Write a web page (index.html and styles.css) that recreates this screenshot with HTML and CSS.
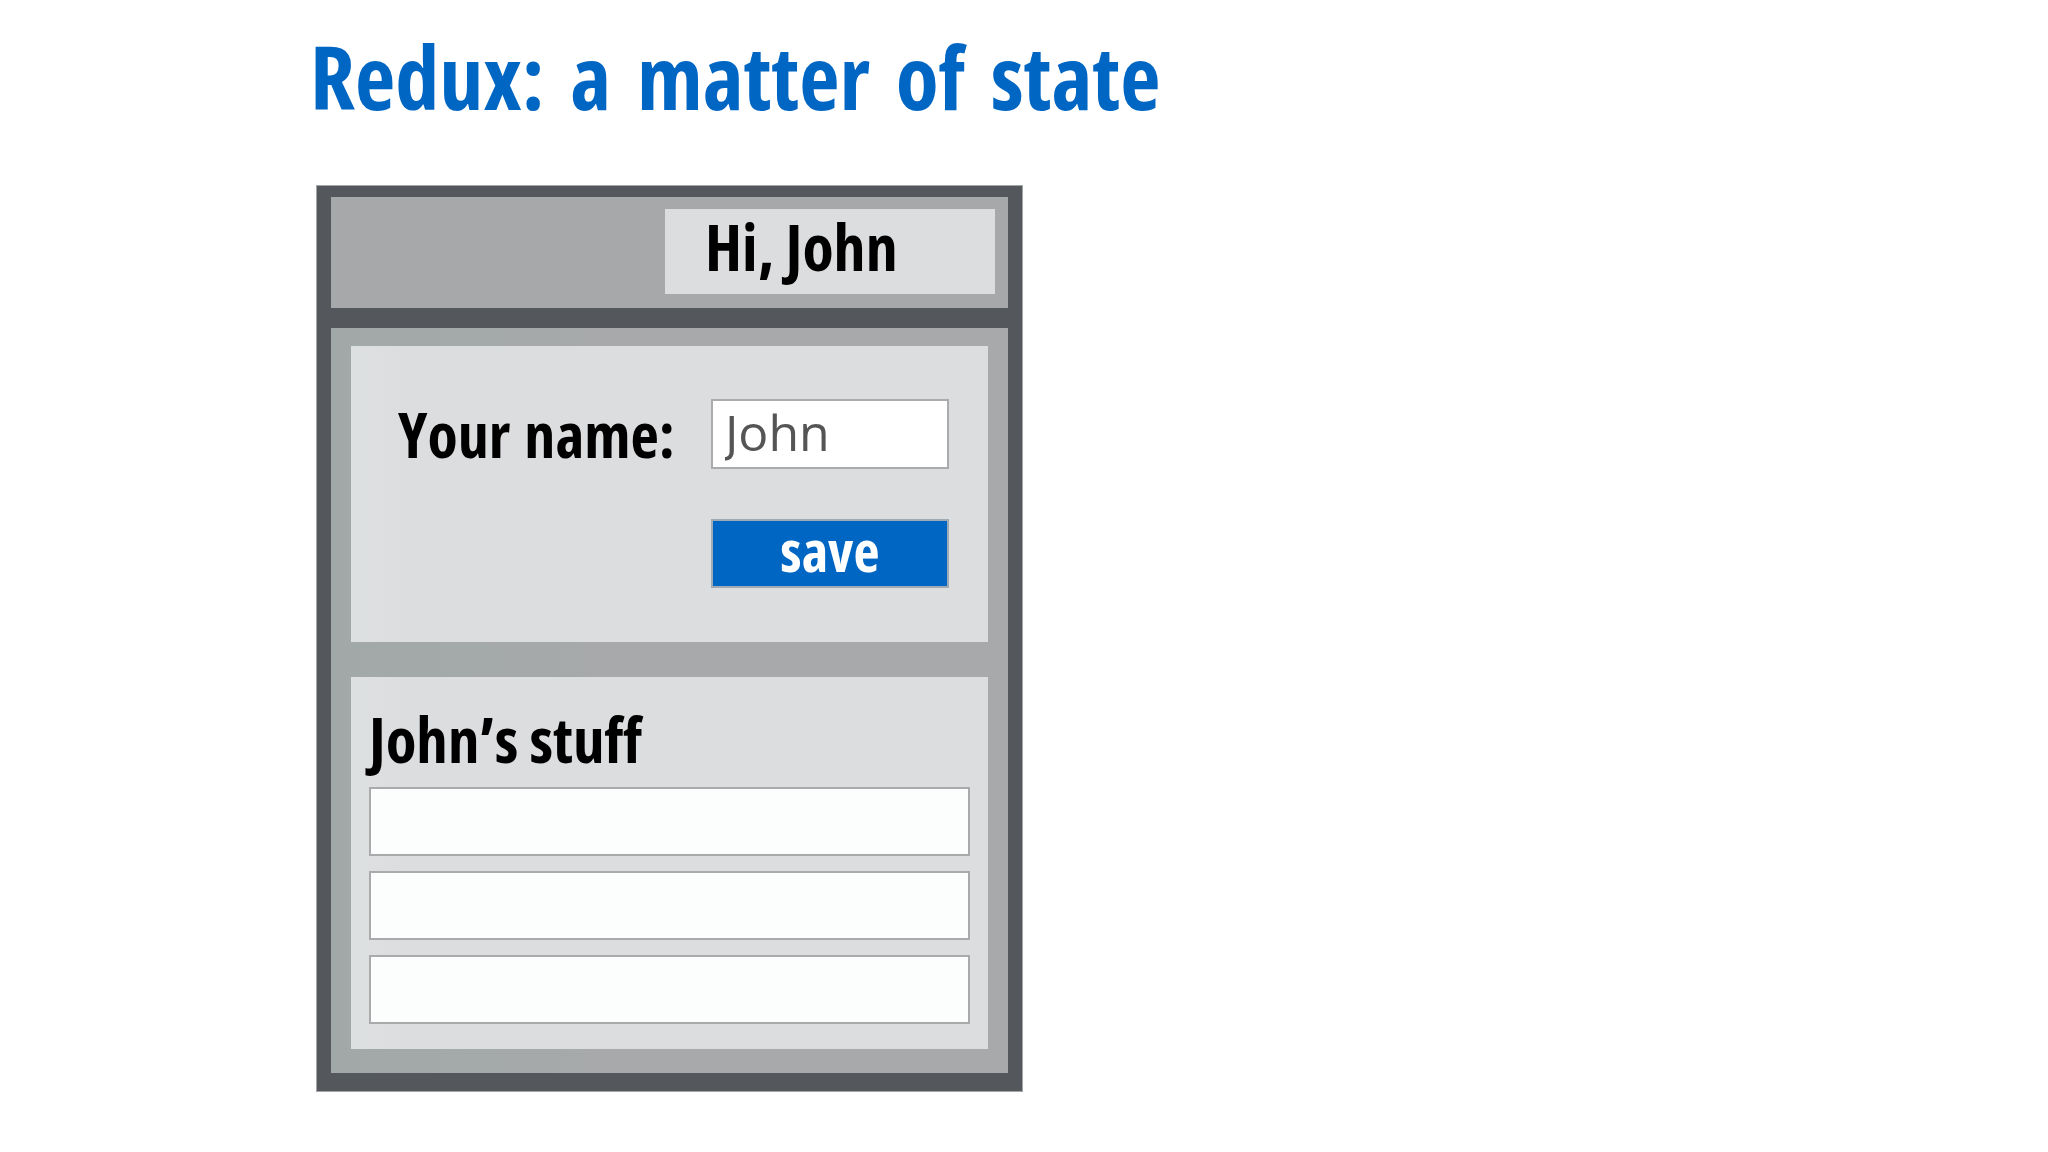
FILE: index.html
```html
<!DOCTYPE html>
<html lang="en">
<head>
    <meta charset="UTF-8">
    <meta name="viewport" content="width=device-width, initial-scale=1.0">
    <title>Redux: a matter of state</title>
    <link rel="stylesheet" href="styles.css">
</head>
<body>
    <div class="slide">
        <h1 class="title">Redux: a matter of state</h1>

        <div class="app-window">
            <!-- Top bar with the greeting -->
            <div class="app-header">
                <div class="greeting">Hi, John</div>
            </div>

            <div class="app-main">
                <!-- Name form -->
                <div class="panel name-form">
                    <label class="name-label" for="name">Your name:</label>
                    <input class="name-input" id="name" type="text" value="John">
                    <button class="save-btn">save</button>
                </div>

                <!-- List of the user's things -->
                <div class="panel stuff">
                    <h2 class="stuff-title">John’s stuff</h2>
                    <div class="stuff-list">
                        <div class="stuff-row"></div>
                        <div class="stuff-row"></div>
                        <div class="stuff-row"></div>
                    </div>
                </div>
            </div>
        </div>
    </div>
</body>
</html>
```

FILE: styles.css
```css
* {
    margin: 0;
    padding: 0;
    box-sizing: border-box;
}

body {
    background: #ffffff;
    font-family: 'Open Sans', 'Noto Sans', sans-serif;
}

.slide {
    padding: 32px 0 0 310px;
}

.title {
    font-size: 88px;
    line-height: 1;
    font-weight: 700;
    font-stretch: 75%;
    color: #0066c4;
    word-spacing: 10px;
}

.app-window {
    width: 707px;
    margin: 65px 0 0 6px;
    padding: 11px 14px 18px;
    background: #54585c;
    border: 1px solid #a3a5a7;
}

.app-header {
    height: 111px;
    margin-bottom: 20px;
    background: #a7a8aa;
    display: flex;
    justify-content: flex-end;
    padding: 12px 13px 0 0;
}

.greeting {
    width: 330px;
    height: 85px;
    padding: 6px 0 0 40px;
    background: #dcdddf;
    font-size: 64px;
    line-height: 1;
    font-weight: 700;
    font-stretch: 75%;
    color: #000;
}

.app-main {
    display: flex;
    flex-direction: column;
    gap: 35px;
    padding: 18px 20px 24px 20px;
    background: linear-gradient(90deg, #a1a9a8 0%, #a7a9aa 40%, #a8a9ab 100%);
}

.panel {
    background: linear-gradient(90deg, #dde0e0 0%, #dcdddf 8%, #dcdddf 100%);
}

.name-form {
    height: 296px;
    display: grid;
    grid-template-columns: 1fr 238px;
    grid-template-rows: 70px 69px;
    row-gap: 50px;
    column-gap: 36px;
    align-items: center;
    padding: 53px 40px 0 47px;
}

.name-label {
    font-size: 62px;
    line-height: 1;
    font-weight: 700;
    font-stretch: 75%;
    color: #000;
    white-space: nowrap;
    word-spacing: 3px;
}

.name-input {
    width: 238px;
    height: 70px;
    padding: 0 0 4px 12px;
    border: 2px solid #aaabad;
    background: #ffffff;
    font-family: 'Open Sans', sans-serif;
    font-size: 50px;
    color: #555555;
    outline: none;
}

.save-btn {
    grid-column: 2;
    width: 238px;
    height: 69px;
    padding-bottom: 6px;
    border: 2px solid #a0aab4;
    background: #0066c4;
    font-family: 'Open Sans', sans-serif;
    font-size: 57px;
    line-height: 1;
    font-weight: 700;
    font-stretch: 75%;
    color: #ffffff;
}

.stuff {
    height: 372px;
    padding: 30px 18px 0;
}

.stuff-title {
    font-size: 63px;
    line-height: 1;
    font-weight: 700;
    font-stretch: 75%;
    color: #000;
    margin-bottom: 17px;
}

.stuff-list {
    display: flex;
    flex-direction: column;
    gap: 15px;
}

.stuff-row {
    height: 69px;
    background: #fcfdfd;
    border: 2px solid #a9aaac;
}
```
